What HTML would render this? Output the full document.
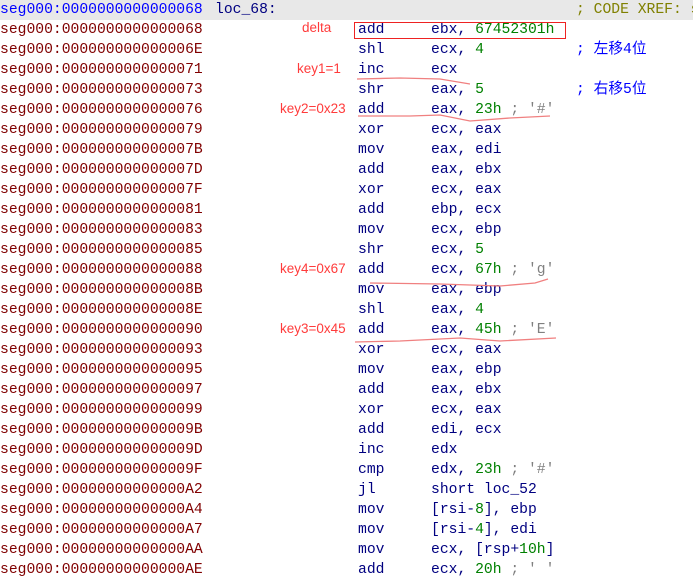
<!DOCTYPE html>
<html><head><meta charset="utf-8"><style>
body{margin:0;width:693px;height:586px;background:#fff;overflow:hidden;position:relative;font-family:"Liberation Mono",monospace;font-size:14.7px}
.r{position:absolute;left:0;height:20px;line-height:21px;width:693px;white-space:pre}
.a{position:absolute;left:0;color:#800000}
.m{position:absolute;left:358px;color:#000080}
.o{position:absolute;left:431px;color:#000080}
.n{color:#008000}
.g{color:#808080}
.c{position:absolute;left:576px;color:#0000ff;font-family:"Liberation Mono","Noto Sans CJK SC",monospace}
.k{position:absolute;color:#ff3b3b;font-family:"Liberation Sans",sans-serif;font-size:13.5px;white-space:pre}
</style></head><body>
<div class="r" style="top:0;background:#e8e8e8"><span class="a" style="color:#0000ff">seg000:0000000000000068</span><span style="position:absolute;left:215px;color:#000080">loc_68:</span><span class="c" style="color:#808000">; CODE XREF: s</span></div>
<div class="r" style="top:20px"><span class="a">seg000:0000000000000068</span><span class="m">add</span><span class="o">ebx, <span class="n">67452301h</span></span></div>
<div class="r" style="top:40px"><span class="a">seg000:000000000000006E</span><span class="m">shl</span><span class="o">ecx, <span class="n">4</span></span><span class="c">; 左移4位</span></div>
<div class="r" style="top:60px"><span class="a">seg000:0000000000000071</span><span class="m">inc</span><span class="o">ecx</span></div>
<div class="r" style="top:80px"><span class="a">seg000:0000000000000073</span><span class="m">shr</span><span class="o">eax, <span class="n">5</span></span><span class="c">; 右移5位</span></div>
<div class="r" style="top:100px"><span class="a">seg000:0000000000000076</span><span class="m">add</span><span class="o">eax, <span class="n">23h</span> <span class="g">; '#'</span></span></div>
<div class="r" style="top:120px"><span class="a">seg000:0000000000000079</span><span class="m">xor</span><span class="o">ecx, eax</span></div>
<div class="r" style="top:140px"><span class="a">seg000:000000000000007B</span><span class="m">mov</span><span class="o">eax, edi</span></div>
<div class="r" style="top:160px"><span class="a">seg000:000000000000007D</span><span class="m">add</span><span class="o">eax, ebx</span></div>
<div class="r" style="top:180px"><span class="a">seg000:000000000000007F</span><span class="m">xor</span><span class="o">ecx, eax</span></div>
<div class="r" style="top:200px"><span class="a">seg000:0000000000000081</span><span class="m">add</span><span class="o">ebp, ecx</span></div>
<div class="r" style="top:220px"><span class="a">seg000:0000000000000083</span><span class="m">mov</span><span class="o">ecx, ebp</span></div>
<div class="r" style="top:240px"><span class="a">seg000:0000000000000085</span><span class="m">shr</span><span class="o">ecx, <span class="n">5</span></span></div>
<div class="r" style="top:260px"><span class="a">seg000:0000000000000088</span><span class="m">add</span><span class="o">ecx, <span class="n">67h</span> <span class="g">; 'g'</span></span></div>
<div class="r" style="top:280px"><span class="a">seg000:000000000000008B</span><span class="m">mov</span><span class="o">eax, ebp</span></div>
<div class="r" style="top:300px"><span class="a">seg000:000000000000008E</span><span class="m">shl</span><span class="o">eax, <span class="n">4</span></span></div>
<div class="r" style="top:320px"><span class="a">seg000:0000000000000090</span><span class="m">add</span><span class="o">eax, <span class="n">45h</span> <span class="g">; 'E'</span></span></div>
<div class="r" style="top:340px"><span class="a">seg000:0000000000000093</span><span class="m">xor</span><span class="o">ecx, eax</span></div>
<div class="r" style="top:360px"><span class="a">seg000:0000000000000095</span><span class="m">mov</span><span class="o">eax, ebp</span></div>
<div class="r" style="top:380px"><span class="a">seg000:0000000000000097</span><span class="m">add</span><span class="o">eax, ebx</span></div>
<div class="r" style="top:400px"><span class="a">seg000:0000000000000099</span><span class="m">xor</span><span class="o">ecx, eax</span></div>
<div class="r" style="top:420px"><span class="a">seg000:000000000000009B</span><span class="m">add</span><span class="o">edi, ecx</span></div>
<div class="r" style="top:440px"><span class="a">seg000:000000000000009D</span><span class="m">inc</span><span class="o">edx</span></div>
<div class="r" style="top:460px"><span class="a">seg000:000000000000009F</span><span class="m">cmp</span><span class="o">edx, <span class="n">23h</span> <span class="g">; '#'</span></span></div>
<div class="r" style="top:480px"><span class="a">seg000:00000000000000A2</span><span class="m">jl</span><span class="o">short loc_52</span></div>
<div class="r" style="top:500px"><span class="a">seg000:00000000000000A4</span><span class="m">mov</span><span class="o">[rsi-<span class="n">8</span>], ebp</span></div>
<div class="r" style="top:520px"><span class="a">seg000:00000000000000A7</span><span class="m">mov</span><span class="o">[rsi-<span class="n">4</span>], edi</span></div>
<div class="r" style="top:540px"><span class="a">seg000:00000000000000AA</span><span class="m">mov</span><span class="o">ecx, [rsp+<span class="n">10h</span>]</span></div>
<div class="r" style="top:560px"><span class="a">seg000:00000000000000AE</span><span class="m">add</span><span class="o">ecx, <span class="n">20h</span> <span class="g">; ' '</span></span></div>
<div class="k" style="left:302px;top:20px">delta</div>
<div class="k" style="left:297px;top:61px">key1=1</div>
<div class="k" style="left:280px;top:101px">key2=0x23</div>
<div class="k" style="left:280px;top:261px">key4=0x67</div>
<div class="k" style="left:280px;top:321px">key3=0x45</div>
<svg width="693" height="586" style="position:absolute;left:0;top:0" fill="none">
<rect x="354.5" y="22.5" width="211" height="16" stroke="#ee2222" stroke-width="1"/>
<g stroke="#f08080" stroke-width="1.3">
<path d="M357 79 L400 78 L440 79 L470 84"/>
<path d="M358 116 L410 116 L440 115 L470 121 L510 118 L550 116"/>
<path d="M370 283 L440 284 L500 286 L535 283 L548 279"/>
<path d="M355 342 L400 341 L460 338 L500 341 L556 338"/>
</g></svg>
</body></html>
